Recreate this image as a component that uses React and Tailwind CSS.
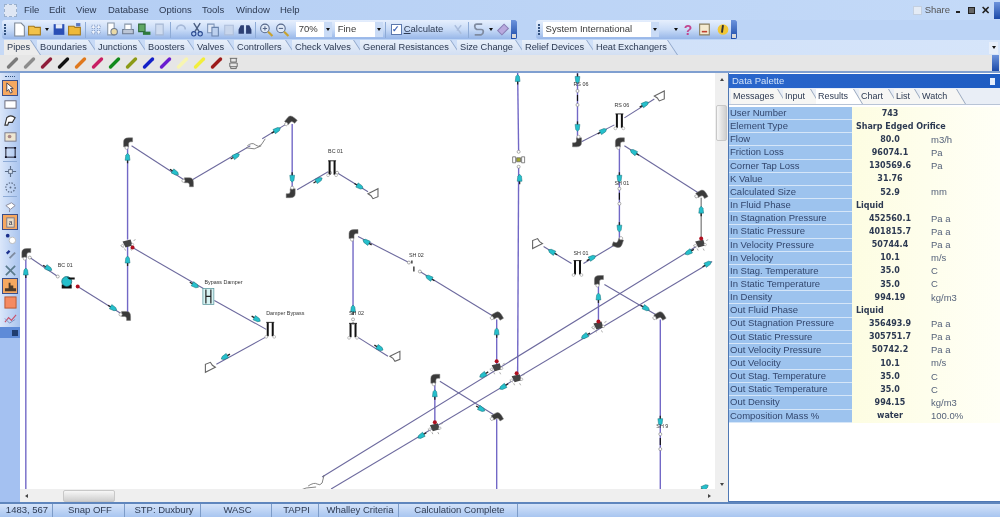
import React from 'react';

const FONT = { fontFamily: '"Liberation Sans", Arial, sans-serif' };

const menus = ['File', 'Edit', 'View', 'Database', 'Options', 'Tools', 'Window', 'Help'];
const menuWidths = ['w-[25px]', 'w-[27px]', 'w-[32px]', 'w-[51px]', 'w-[43px]', 'w-[34px]', 'w-[44px]', 'w-[30px]'];
const mainTabs = ['Pipes', 'Boundaries', 'Junctions', 'Boosters', 'Valves', 'Controllers', 'Check Valves', 'General Resistances', 'Size Change', 'Relief Devices', 'Heat Exchangers'];
const tabWidths = ['w-[37px]', 'w-[62px]', 'w-[54px]', 'w-[53px]', 'w-[44px]', 'w-[62px]', 'w-[72px]', 'w-[101px]', 'w-[69px]', 'w-[75px]', 'w-[85px]'];
const pipeColors = ['#7a7a7a', '#8c8c8c', '#8f1d3a', '#111111', '#e0781c', '#c81e63', '#128a1c', '#8c9a14', '#1420c8', '#6a1cd0', '#f7f5b0', '#f2ee3c', '#9c1a1a'];
const paletteTabs = ['Messages', 'Input', 'Results', 'Chart', 'List', 'Watch'];
const panelTabWidths = ['w-[56px]', 'w-[37px]', 'w-[47px]', 'w-[39px]', 'w-[30px]', 'w-[46px]'];
const statusCells = [['1483, 567', 'w-[51px]'], ['Snap OFF', 'w-[69px]'], ['STP: Duxbury', 'w-[73px]'], ['WASC', 'w-[68px]'], ['TAPPI', 'w-[44px]'], ['Whalley Criteria', 'w-[77px]'], ['Calculation Complete', 'w-[116px]']];

const rows = [
  ['User Number', '743', ''],
  ['Element Type', 'Sharp Edged Orifice', '', 'left'],
  ['Flow', '80.0', 'm3/h'],
  ['Friction Loss', '96074.1', 'Pa'],
  ['Corner Tap Loss', '130569.6', 'Pa'],
  ['K Value', '31.76', ''],
  ['Calculated Size', '52.9', 'mm'],
  ['In Fluid Phase', 'Liquid', '', 'left'],
  ['In Stagnation Pressure', '452560.1', 'Pa a'],
  ['In Static Pressure', '401815.7', 'Pa a'],
  ['In Velocity Pressure', '50744.4', 'Pa a'],
  ['In Velocity', '10.1', 'm/s'],
  ['In Stag. Temperature', '35.0', 'C'],
  ['In Static Temperature', '35.0', 'C'],
  ['In Density', '994.19', 'kg/m3'],
  ['Out Fluid Phase', 'Liquid', '', 'left'],
  ['Out Stagnation Pressure', '356493.9', 'Pa a'],
  ['Out Static Pressure', '305751.7', 'Pa a'],
  ['Out Velocity Pressure', '50742.2', 'Pa a'],
  ['Out Velocity', '10.1', 'm/s'],
  ['Out Stag. Temperature', '35.0', 'C'],
  ['Out Static Temperature', '35.0', 'C'],
  ['Out Density', '994.15', 'kg/m3'],
  ['Composition Mass %', 'water', '100.0%'],
];

// pipes in page coordinates, the svg viewBox starts at the canvas corner
const bluePipes = [
  [25, 258, 25, 490], [127, 316, 127, 245], [127, 240, 127, 146], [292, 124, 292, 190],
  [353, 237, 353, 310], [497, 320, 497, 365], [518, 73, 519, 152], [519, 168, 518, 374],
  [578, 73, 578, 140], [620, 146, 620, 240], [599, 285, 599, 325], [435, 384, 435, 425],
  [497, 420, 497, 490], [661, 320, 661, 490],
];
const diagPipes = [
  [29, 258, 57, 277], [77, 287, 122, 315], [131, 146, 185, 181], [192, 180, 250, 146], [262, 139, 288, 123],
  [297, 190, 328, 172], [337, 173, 368, 192], [132, 248, 203, 289], [214, 301, 266, 330], [265, 338, 216, 365],
  [358, 338, 388, 357], [358, 237, 409, 263], [420, 272, 494, 317], [322, 478, 697, 247], [331, 490, 713, 262],
  [582, 142, 615, 125], [625, 118, 655, 99], [616, 245, 584, 264], [572, 264, 544, 247], [625, 146, 699, 193],
  [440, 382, 495, 416], [605, 285, 658, 316],
];
const arrows = [
  [25, 272, -90], [48, 269, 30], [113, 309, 30], [127, 260, -90], [127, 157, -90], [175, 173, 32], [236, 156, -30], [277, 130, -30],
  [292, 179, 90], [319, 180, -30], [360, 187, 30], [195, 286, 30], [257, 320, 30], [224, 358, 150], [353, 309, -90], [366, 242, 210],
  [429, 278, 210], [518, 78, -90], [520, 178, -90], [578, 80, 90], [578, 128, 90], [604, 131, -28], [646, 104, -30], [620, 179, 90],
  [620, 229, 90], [634, 152, 212], [593, 258, -28], [552, 252, 210], [702, 210, -90], [689, 253, 150], [709, 264, -30], [599, 297, -90],
  [647, 309, 30], [380, 349, 30], [497, 332, -90], [483, 376, 148], [435, 394, -90], [482, 410, 30], [421, 437, 148], [503, 388, 148],
  [585, 337, 148], [661, 423, 90], [706, 488, -30],
];
const elbows = [[25, 254, 0], [125, 316, 90], [127, 143, 0], [188, 182, 90], [290, 121, 40], [291, 193, 180], [353, 235, 0], [497, 317, 60], [435, 380, 0], [497, 418, 60], [578, 142, 180], [620, 143, 0], [619, 243, 200], [702, 195, 60], [599, 281, 0], [660, 317, 60]];
const tees = [[127, 243], [701, 243], [497, 367], [517, 378], [599, 325], [435, 427]];
const reds = [[77, 287], [132, 248], [702, 239], [497, 362], [517, 374], [599, 322], [435, 423]];
const nodes = [[578, 91], [578, 105], [620, 189], [620, 204], [661, 435], [661, 450], [353, 320], [519, 152], [519, 167], [409, 263], [420, 272], [29, 258], [57, 277], [330, 173], [337, 173]];
const dampers = [[332, 168], [620, 121], [578, 268], [353, 331], [270, 330]];
const nozzles = [[373, 194, 0], [660, 96, 0], [538, 244, 180], [395, 357, 0], [210, 368, 180]];
const labels = [['BC 01', 57, 267], ['Bypass Damper', 204, 285], ['Damper Bypass', 266, 316], ['BC 01', 328, 153], ['SH 02', 409, 257], ['SH 02', 349, 316], ['RS 06', 574, 86], ['RS 06', 615, 107], ['SH 01', 615, 185], ['SH 01', 574, 255], ['SH 9', 657, 429]];

const Arrow = ({ x, y, a }) => (
  <g transform={`translate(${x} ${y}) rotate(${a})`}>
    <path d="M-3 0H-6.5" stroke="#222" strokeWidth="1.3" />
    <path d="M-3.5 -2.4L1.5 -1.8L3.5 0L1.5 1.8L-3.5 2.4Z" fill="#25c0cc" stroke="#16707a" strokeWidth="0.5" />
  </g>
);

const Elbow = ({ x, y, r }) => (
  <g transform={`translate(${x} ${y}) rotate(${r})`}>
    <path d="M-4 4V-1Q-4 -5 1 -5H5V-1H3Q1 -1 1 1V4Z" fill="#3a3a3a" stroke="#777" strokeWidth="0.5" />
    <circle cx="-1" cy="5" r="1.6" fill="#fff" stroke="#888" strokeWidth="0.6" />
  </g>
);

const Damper = ({ x, y }) => (
  <g transform={`translate(${x} ${y})`} fill="none">
    <path d="M-4 -7H4" stroke="#444" strokeWidth="1.1" />
    <path d="M-2.5 -7V7M2.5 -7V7" stroke="#111" strokeWidth="2" />
    <circle cx="-4" cy="7.5" r="1.4" fill="#fff" stroke="#888" strokeWidth="0.5" />
    <circle cx="4" cy="7.5" r="1.4" fill="#fff" stroke="#888" strokeWidth="0.5" />
  </g>
);

const Nozzle = ({ x, y, r }) => (
  <g transform={`translate(${x} ${y}) rotate(${r})`}>
    <path d="M-5 0L-1 -2L5 -5L5 3L0 5L-2 2Z" fill="#fff" stroke="#666" strokeWidth="1.1" />
  </g>
);

const Diagram = () => (
  <svg viewBox="20 73 695 417" className="w-full h-full block">
    {bluePipes.map((p, i) => <line key={i} x1={p[0]} y1={p[1]} x2={p[2]} y2={p[3]} stroke="#7268c6" strokeWidth="1.4" />)}
    {diagPipes.map((p, i) => <line key={i} x1={p[0]} y1={p[1]} x2={p[2]} y2={p[3]} stroke="#6d6a9e" strokeWidth="1.1" />)}
    <line x1="702" y1="198" x2="702" y2="240" stroke="#8a8a8a" strokeWidth="1.4" />
    {tees.map((t, i) => (
      <g key={i} transform={`translate(${t[0]} ${t[1]})`}>
        <path d="M-5 -1L3 -3L5 3L-2 5Z" fill="#444" />
        <path d="M-7 3L-4 5M6 -2L8 -3M-3 6L-2 8M3 6L4 8" stroke="#888" strokeWidth="0.7" />
        <circle cx="-5" cy="3" r="1.2" fill="#fff" stroke="#888" strokeWidth="0.5" />
        <circle cx="5" cy="2" r="1.2" fill="#fff" stroke="#888" strokeWidth="0.5" />
      </g>
    ))}
    {elbows.map((e, i) => <Elbow key={i} x={e[0]} y={e[1]} r={e[2]} />)}
    {nodes.map((n, i) => <circle key={i} cx={n[0]} cy={n[1]} r="1.5" fill="#fff" stroke="#777" strokeWidth="0.6" />)}
    {[[578, 95, 578, 101], [620, 193, 620, 200], [661, 439, 661, 446], [353, 323, 353, 325], [412, 261, 412, 264], [414, 267, 414, 272]].map((p, i) => (
      <line key={i} x1={p[0]} y1={p[1]} x2={p[2]} y2={p[3]} stroke="#111" strokeWidth="1.2" />
    ))}
    {dampers.map((d, i) => <Damper key={i} x={d[0]} y={d[1]} />)}
    {nozzles.map((n, i) => <Nozzle key={i} x={n[0]} y={n[1]} r={n[2]} />)}
    {arrows.map((a, i) => <Arrow key={i} x={a[0]} y={a[1]} a={a[2]} />)}
    {reds.map((r, i) => <circle key={i} cx={r[0]} cy={r[1]} r="2" fill="#b01020" />)}

    {/* pump BC 01 */}
    <g transform="translate(66 283)">
      <rect x="-5" y="2" width="10" height="4" fill="#111" />
      <circle cx="0" cy="-1" r="5" fill="#25c0cc" stroke="#14606a" strokeWidth="0.7" />
      <path d="M0 -5H8V-3H3" fill="#111" />
    </g>
    {/* bypass damper */}
    <g transform="translate(208 297)">
      <rect x="-5.5" y="-8" width="11" height="16" fill="#d7f3f3" stroke="#4e8f96" strokeWidth="0.7" />
      <path d="M-2.5 -7V7M2.5 -7V7M-2.5 0H2.5" stroke="#222" strokeWidth="1.2" />
    </g>
    {/* valve on the vertical pipe */}
    <g transform="translate(519 160)" fill="none" stroke="#666" strokeWidth="0.8">
      <path d="M-6 -3H-3V3H-6ZM3 -3H6V3H3Z" />
      <path d="M-2 -2H2V2H-2Z" fill="#a4a82e" />
    </g>
    {/* bends with a flex section */}
    <path d="M247 146q5 -4 8 -1q3 3 6 0l4 -6M246 148l8 1l7 -3" fill="#fff" stroke="#666" strokeWidth="0.8" />
    <path d="M308 487q6 -4 9 -2q3 2 5 -1l2 -8M298 492l8 -3l10 -1" fill="none" stroke="#666" strokeWidth="0.8" />
    {labels.map((l, i) => <text key={i} x={l[1]} y={l[2]} fontSize="5.4" fill="#333" style={FONT}>{l[0]}</text>)}
  </svg>
);

// tab with a slanted trailing edge: the outer shape shows as the slanted line
const MainTab = ({ label, active, width }) => (
  <div className={`-mr-[4px] h-[15px] ${width} bg-[#8fa6ca] [clip-path:polygon(0_0,calc(100%-10px)_0,100%_100%,0_100%)] ${active ? 'z-10' : ''}`}>
    <div className={`h-full pl-[3px] flex items-center [clip-path:polygon(0_0,calc(100%-11px)_0,calc(100%-1px)_100%,0_100%)] ${active ? 'bg-[#ececec]' : 'bg-gradient-to-b from-[#e8eff9] to-[#d2dff3]'}`}>
      <span className="text-[9.25px] text-[#2d3a52] whitespace-nowrap">{label}</span>
    </div>
  </div>
);

const Grip = () => (
  <div className="flex flex-col gap-[1px] w-[3px] mx-[2px]">
    {[0, 1, 2, 3].map(i => <span key={i} className="w-[2px] h-[2px] bg-[#32527f]" />)}
  </div>
);

const Sep = () => <span className="w-[1px] h-[16px] mx-[2px] bg-[#8eabd6]" />;
const Caret = () => <span className="block w-0 h-0 border-x-[2px] border-x-transparent border-t-[3px] border-t-[#111] mx-[2px]" />;
const Ico = ({ children, w = 'w-[16px]' }) => <svg viewBox="0 0 14 14" className={`${w} h-[15px] shrink-0`}>{children}</svg>;
const ToolEnd = () => <div className="ml-auto self-stretch w-[7px] bg-gradient-to-b from-[#6c93dc] to-[#1c4aa8] rounded-r-[2px] flex items-end justify-center"><span className="w-[4px] h-[4px] bg-[#d8d8d8] mb-[1px]" /></div>;

const Combo = ({ label, w }) => (
  <div className={`${w} h-[15px] bg-white flex items-center justify-between pl-[3px] text-[9.5px] text-[#3b3b3b] shrink-0`}>
    <span className="whitespace-nowrap">{label}</span>
    <span className="w-[8px] h-full bg-[#c9dbf6] flex items-center justify-center"><Caret /></span>
  </div>
);

const Tool = ({ active, children }) => (
  <div className={`w-[16px] h-[16px] flex items-center justify-center ${active ? 'bg-[#f6a860] border border-[#3c4f8a]' : ''}`}>
    <svg viewBox="0 0 14 14" className="w-[13px] h-[13px]">{children}</svg>
  </div>
);

export default function App() {
  return (
    <div className="w-[1000px] h-[517px] flex flex-col overflow-hidden bg-[#bcd4f6] text-[#2d3a52] blur-[0.35px]" style={FONT}>
      {/* menu */}
      <div className="h-[20px] flex items-center shrink-0 bg-gradient-to-r from-[#b3cdf3] to-[#c4daf8]">
        <div className="w-[13px] h-[13px] ml-[4px] bg-[#dfe7f4] border border-dashed border-[#9bb0cc]" />
        <div className="flex ml-[7px] text-[9.5px]">
          {menus.map((m, i) => <span key={m} className={menuWidths[i]}>{m}</span>)}
        </div>
        <div className="ml-auto flex items-center text-[9.5px] text-[#555]">
          <span className="w-[9px] h-[9px] bg-[#e4ebf5] border border-[#c3cfe0] mr-[3px]" />
          <span className="mr-[6px]">Share</span>
          <span className="w-[4px] h-[2px] bg-[#222] mt-[4px] mr-[8px]" />
          <span className="w-[7px] h-[7px] border border-[#222] bg-[#666] mr-[6px]" />
          <span className="font-bold text-[11px] text-[#222] mr-[4px]">✕</span>
          <div className="w-[6px] h-[17px] bg-gradient-to-b from-[#6c93dc] to-[#1c4aa8]" />
        </div>
      </div>

      {/* toolbars */}
      <div className="h-[20px] flex items-start shrink-0">
        <div className="w-[515px] ml-[2px] h-[19px] flex items-center bg-gradient-to-b from-[#e6effd] via-[#c8dbf7] to-[#97b6e8] rounded-l-[3px]">
          <Grip />
          <div className="flex items-center ml-[2px]">
            <Ico><path d="M3 1H9L12 4V13H3Z" fill="#fff" stroke="#7c8796" /></Ico>
            <Ico><path d="M1 4H6L7 5H12V12H1Z" fill="#f1c24b" stroke="#a57a1d" /></Ico>
            <Caret />
            <Ico><path d="M2 2H12V12H2Z" fill="#2a4fb5" /><path d="M4 2H10V6H4Z" fill="#e6ecf8" /></Ico>
            <Ico><path d="M1 4H6L7 5H12V12H1Z" fill="#eeb938" stroke="#a57a1d" /><rect x="8" y="1" width="4" height="3" fill="#5a78c0" /></Ico>
            <Sep />
            <Ico><path d="M3 3H6V6H3ZM8 3H11V6H8ZM3 8H6V11H3ZM8 8H11V11H8Z" fill="#eef3fb" stroke="#8099c4" strokeDasharray="1 1" /></Ico>
            <Ico><path d="M3 1H9V12H3Z" fill="#fff" stroke="#8896a8" /><circle cx="9" cy="9" r="3" fill="#e9d9a5" stroke="#6d7a8f" /></Ico>
            <Ico><path d="M2 7H12V11H2Z" fill="#bcc6d6" stroke="#6d7a8f" /><path d="M4 2H10V7H4Z" fill="#fff" stroke="#8896a8" /></Ico>
            <Ico><path d="M2 2H8V9H2Z" fill="#5fa763" stroke="#2f6b3c" /><path d="M6 9H13V12H6Z" fill="#2f7a3c" /></Ico>
            <Ico><path d="M3 2H10V12H3Z" fill="#cfdcf0" stroke="#a6b8d4" /></Ico>
            <Sep />
            <Ico><path d="M3 7A4 4 0 0 1 11 7" fill="none" stroke="#a6b9d8" strokeWidth="1.6" /></Ico>
            <Ico><path d="M4 1L9 9M10 1L5 9" stroke="#4a5d80" strokeWidth="1.3" /><circle cx="4" cy="11" r="2" fill="none" stroke="#27478f" /><circle cx="10" cy="11" r="2" fill="none" stroke="#27478f" /></Ico>
            <Ico><path d="M2 2H8V10H2Z" fill="#dfe8f6" stroke="#7d94b8" /><path d="M6 5H12V13H6Z" fill="#bcd0ee" stroke="#6a84ad" /></Ico>
            <Ico><path d="M3 3H11V12H3Z" fill="#c8d6ec" stroke="#aebfdb" /></Ico>
            <Ico><path d="M3 3H6V11H1V7ZM11 3H8V11H13V7Z" fill="#2c3f74" /></Ico>
            <Sep />
            <Ico><circle cx="6" cy="6" r="4" fill="#dfe9f7" stroke="#55678a" /><path d="M4 6H8M6 4V8" stroke="#55678a" /><path d="M9 9L13 13" stroke="#c9a22e" strokeWidth="2" /></Ico>
            <Ico><circle cx="6" cy="6" r="4" fill="#dfe9f7" stroke="#55678a" /><path d="M4 6H8" stroke="#55678a" /><path d="M9 9L13 13" stroke="#c9a22e" strokeWidth="2" /></Ico>
          </div>
          <div className="flex items-center ml-[6px]">
            <Combo label="70%" w="w-[36px]" />
            <div className="w-[3px]" />
            <Combo label="Fine" w="w-[48px]" />
            <Sep />
            <span className="w-[11px] h-[11px] bg-white border border-[#5b78ad] ml-[3px] flex items-center justify-center text-[9px] font-bold text-[#3f64b5] leading-none">✓</span>
            <span className="text-[9.5px] ml-[2px] whitespace-nowrap w-[46px]"><span className="underline">C</span>alculate</span>
            <Ico><path d="M4 3L10 11M10 3L6 8" stroke="#a9bcdc" strokeWidth="1.3" /></Ico>
            <Sep />
            <Ico><path d="M10 2H5Q3 2 3 4T5 7H9Q11 7 11 9T9 12H3" fill="none" stroke="#7f8ba0" strokeWidth="1.6" /></Ico>
            <Caret />
            <Ico><path d="M2 8L8 2L12 6L6 12Z" fill="#b9a9de" stroke="#8a7fb6" /></Ico>
          </div>
          <ToolEnd />
        </div>
        <div className="w-[201px] ml-[19px] h-[19px] flex items-center bg-gradient-to-b from-[#e6effd] via-[#c8dbf7] to-[#97b6e8] rounded-l-[3px]">
          <Grip />
          <Combo label="System International" w="w-[116px]" />
          <span className="ml-[13px] flex"><Caret /></span>
          <Ico><text x="3" y="12" fontSize="13" fontWeight="700" fill="#c2458f" style={FONT}>?</text></Ico>
          <span className="w-[2px]" />
          <Ico><path d="M2 2H11V12H2Z" fill="#f4ead0" stroke="#8a7d5c" /><path d="M4 9H9" stroke="#c0402f" strokeWidth="1.5" /></Ico>
          <span className="w-[2px]" />
          <Ico><circle cx="7" cy="7" r="5" fill="#f1c736" /><path d="M7 3L6 10" stroke="#333" strokeWidth="1.8" /></Ico>
          <ToolEnd />
        </div>
      </div>

      {/* component tabs */}
      <div className="h-[15px] flex items-end shrink-0 pl-[4px] bg-gradient-to-r from-[#c6d9f6] to-[#d6e5fa]">
        {mainTabs.map((t, i) => <MainTab key={t} label={t} active={i === 0} width={tabWidths[i]} />)}
        <div className="ml-auto mr-[2px] self-center w-[9px] h-[12px] bg-[#e8effa] flex items-center justify-center"><Caret /></div>
      </div>

      {/* pipe palette */}
      <div className="h-[18px] flex items-center shrink-0 pl-[5px] bg-[#e6e6e6] border-b-[2px] border-[#7f9fd0]">
        {pipeColors.map(c => (
          <svg key={c} viewBox="0 0 14 14" className="w-[15px] h-[14px] mr-[2px] shrink-0">
            <path d="M3 11L11 3" stroke={c} strokeWidth="3.4" strokeLinecap="round" />
          </svg>
        ))}
        <svg viewBox="0 0 14 14" className="w-[13px] h-[14px] ml-[1px]">
          <path d="M3 2H11M4 2V6H10V2M3 7H11V11H3ZM4 11V13H10V11" fill="none" stroke="#666" />
        </svg>
        <div className="ml-auto self-stretch w-[7px] mr-[1px] bg-gradient-to-b from-[#6c93dc] to-[#1c4aa8]" />
      </div>

      {/* work area */}
      <div className="flex-1 min-h-0 flex">
        <div className="w-[20px] shrink-0 bg-[#a4c1f1] flex flex-col items-center">
          <div className="w-full h-[254px] bg-gradient-to-r from-[#dbe7fa] to-[#a9c4ee] flex flex-col items-center">
            <div className="flex gap-[1px] h-[7px] items-center"><span className="w-[10px] border-t border-dotted border-[#32527f]" /></div>
            <Tool active><path d="M3 1V10L5 8L7 12L9 11L7 7H10Z" fill="#fff" stroke="#445" /></Tool>
            <Tool><rect x="1" y="3" width="12" height="8" fill="#fff" stroke="#667" /></Tool>
            <Tool><path d="M1 12L3 4Q7 0 12 4L9 9H5L4 12Z" fill="#fff" stroke="#333" strokeWidth="1.2" /></Tool>
            <Tool><rect x="1" y="3" width="12" height="9" fill="#efe7d2" stroke="#778" /><circle cx="6" cy="7" r="2" fill="#a88" /></Tool>
            <Tool><rect x="2" y="2" width="10" height="10" fill="none" stroke="#112" /><path d="M1 1H3V3H1ZM11 1H13V3H11ZM1 11H3V13H1ZM11 11H13V13H11Z" fill="#112" /></Tool>
            <span className="w-[14px] h-[1px] bg-[#8eabd6] my-[1px]" />
            <Tool><path d="M7 1V13M1 7H13" stroke="#5a6b85" strokeWidth="1.2" /><rect x="5" y="5" width="4" height="4" fill="#dfe9f7" stroke="#5a6b85" /></Tool>
            <Tool><circle cx="7" cy="7" r="5" fill="none" stroke="#5a6b85" strokeDasharray="1.5 1.5" strokeWidth="1.3" /><circle cx="7" cy="7" r="1" fill="#5a6b85" /></Tool>
            <span className="w-[14px] h-[1px] bg-[#8eabd6] my-[1px]" />
            <Tool><path d="M2 6L8 3L12 6L7 10Z" fill="#fff" stroke="#889" /><path d="M6 10V13" stroke="#889" /></Tool>
            <Tool active><rect x="3" y="2" width="8" height="10" fill="#e9dcc6" stroke="#778" /><text x="5" y="10" fontSize="7" fill="#334" style={FONT}>a</text></Tool>
            <Tool><circle cx="4" cy="4" r="2" fill="#1b2f8c" /><circle cx="9" cy="9" r="3.5" fill="#fff" stroke="#bbb" /></Tool>
            <Tool><path d="M3 6L6 3" stroke="#1b2f8c" strokeWidth="2.5" /><path d="M6 11L12 5" stroke="#7f8ba0" strokeWidth="2" /></Tool>
            <Tool><path d="M2 12L12 2M2 2L12 12" stroke="#5a7a8c" strokeWidth="1.8" /></Tool>
            <Tool active><path d="M1 12H13V9H10V6H7V3H5V9H1Z" fill="#4c3a2a" /></Tool>
            <Tool><rect x="1" y="1" width="12" height="12" fill="#f58a62" stroke="#b8542f" /></Tool>
            <Tool><path d="M1 11L5 6L8 9L13 3" fill="none" stroke="#c8506a" strokeWidth="1.2" /><path d="M1 7L6 12L12 8" fill="none" stroke="#7b8fc0" /></Tool>
          </div>
          <div className="w-full h-[11px] bg-[#5e8bd8] flex items-center justify-end pr-[2px]"><span className="w-[6px] h-[6px] bg-[#203d70]" /></div>
        </div>

        <div className="flex-1 min-w-0 flex flex-col">
          <div className="flex-1 min-h-0 flex">
            <div className="flex-1 min-w-0 bg-white"><Diagram /></div>
            <div className="w-[13px] shrink-0 bg-[#efefef] flex flex-col items-center">
              <span className="mt-[5px] w-0 h-0 border-x-[2px] border-x-transparent border-b-[3px] border-b-[#444]" />
              <div className="mt-[24px] w-[11px] h-[36px] rounded-[2px] bg-gradient-to-r from-[#f7f7f7] to-[#cfcfcf] border border-[#c8c8c8]" />
              <div className="flex-1" />
              <span className="mb-[3px] w-0 h-0 border-x-[2px] border-x-transparent border-t-[3px] border-t-[#444]" />
            </div>
          </div>
          <div className="h-[13px] shrink-0 bg-[#efefef] flex items-center">
            <span className="ml-[5px] w-0 h-0 border-y-[2px] border-y-transparent border-r-[3px] border-r-[#444]" />
            <div className="ml-[35px] w-[52px] h-[12px] rounded-[2px] bg-gradient-to-b from-[#f7f7f7] to-[#cfcfcf] border border-[#c8c8c8]" />
            <span className="ml-auto mr-[17px] w-0 h-0 border-y-[2px] border-y-transparent border-l-[3px] border-l-[#444]" />
          </div>
        </div>

        <div className="w-[272px] shrink-0 border-l border-[#4f78b4] border-b bg-white flex flex-col text-[#2d3a52]">
          <div className="mt-[1px] h-[14px] shrink-0 bg-gradient-to-r from-[#2a66cc] to-[#1e5cc2] flex items-center justify-between px-[3px] text-[9.5px] text-[#cfe0f8]">
            <span>Data Palette</span>
            <span className="w-[5px] h-[7px] bg-[#e6eefb] mr-[2px]" />
          </div>
          <div className="h-[17px] shrink-0 flex items-end pl-[2px] bg-[#e9eef6] border-b border-[#b8c4d6]">
            {paletteTabs.map((t, i) => (
              <div key={t} className={`-mr-[4px] h-[15px] ${panelTabWidths[i]} bg-[#9aa9bf] [clip-path:polygon(0_0,calc(100%-9px)_0,100%_100%,0_100%)] ${i === 2 ? 'z-10' : ''}`}>
                <div className={`h-full pl-[2px] flex items-center [clip-path:polygon(0_0,calc(100%-10px)_0,calc(100%-1px)_100%,0_100%)] ${i === 2 ? 'bg-white' : 'bg-[#f6f6f4]'}`}>
                  <span className="text-[9px] whitespace-nowrap">{t}</span>
                </div>
              </div>
            ))}
          </div>
          <div className="mt-[2px] grid grid-cols-[123px_1fr] auto-rows-[13.17px]">
            {rows.map(([label, value, unit, align]) => (
              <div key={label} className="contents">
                <div className="bg-[#9dc3ee] border-b border-[#d6e6f8] pl-[1px] flex items-center text-[9.5px] text-[#33476e] whitespace-nowrap">{label}</div>
                <div className="bg-gradient-to-r from-[#fdfde2] to-[#fffff6] flex items-center text-[8px]">
                  {align === 'left'
                    ? <span className="pl-[4px] font-bold whitespace-nowrap" style={{ fontFamily: '"DejaVu Sans", sans-serif' }}>{value}</span>
                    : <>
                        <span className="w-[76px] text-center font-bold" style={{ fontFamily: '"DejaVu Sans", sans-serif' }}>{value}</span>
                        <span className="pl-[3px] text-[9.5px] text-[#55627a]" style={FONT}>{unit}</span>
                      </>}
                </div>
              </div>
            ))}
          </div>
        </div>
      </div>

      {/* status */}
      <div className="h-[15px] shrink-0 border-t-[2px] border-[#5f86bd] flex items-stretch gap-[3px] pl-[2px] bg-gradient-to-b from-[#d4e3f9] to-[#a8c5f0] text-[9.5px] text-[#2d3a52]">
        {statusCells.map(([label, w]) => (
          <div key={label} className={`${w} flex items-center justify-center border-r border-[#7d9cc8] whitespace-nowrap`}>{label}</div>
        ))}
      </div>
    </div>
  );
}
